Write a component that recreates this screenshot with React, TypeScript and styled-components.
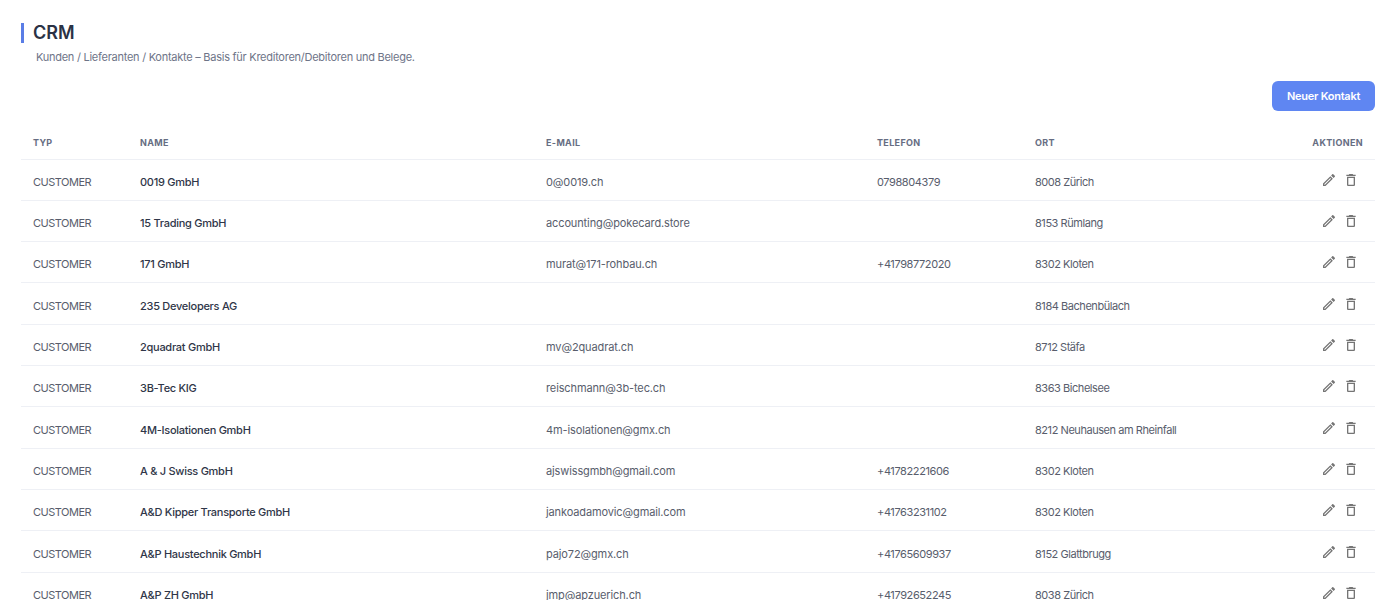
import React from "react";
import styled, { createGlobalStyle } from "styled-components";
import { MdDeleteOutline, MdOutlineEdit } from "react-icons/md";

const contacts = [
  { name: "0019 GmbH", email: "0@0019.ch", phone: "0798804379", city: "8008 Zürich" },
  { name: "15 Trading GmbH", email: "accounting@pokecard.store", phone: "", city: "8153 Rümlang" },
  { name: "171 GmbH", email: "murat@171-rohbau.ch", phone: "+41798772020", city: "8302 Kloten" },
  { name: "235 Developers AG", email: "", phone: "", city: "8184 Bachenbülach" },
  { name: "2quadrat GmbH", email: "mv@2quadrat.ch", phone: "", city: "8712 Stäfa" },
  { name: "3B-Tec KIG", email: "reischmann@3b-tec.ch", phone: "", city: "8363 Bichelsee" },
  { name: "4M-Isolationen GmbH", email: "4m-isolationen@gmx.ch", phone: "", city: "8212 Neuhausen am Rheinfall" },
  { name: "A & J Swiss GmbH", email: "ajswissgmbh@gmail.com", phone: "+41782221606", city: "8302 Kloten" },
  { name: "A&D Kipper Transporte GmbH", email: "jankoadamovic@gmail.com", phone: "+41763231102", city: "8302 Kloten" },
  { name: "A&P Haustechnik GmbH", email: "pajo72@gmx.ch", phone: "+41765609937", city: "8152 Glattbrugg" },
  { name: "A&P ZH GmbH", email: "jmp@apzuerich.ch", phone: "+41792652245", city: "8038 Zürich" },
];

const GlobalStyle = createGlobalStyle`
  html, body {
    margin: 0;
    background: #ffffff;
  }
  #root {
    height: 600px;
    overflow: hidden;
  }
`;

const Page = styled.div`
  padding: 23px 21px 0;
  font-family: Inter, "Open Sans", sans-serif;
  color: #2b3245;
`;

const Title = styled.h1`
  margin: 0;
  height: 20px;
  padding-left: 9px;
  border-left: 3px solid #5a7de6;
  font-size: 18px;
  font-weight: 600;
  line-height: 20px;
  color: #2b3245;
`;

const Subtitle = styled.p`
  margin: 5px 0 0 15px;
  font-size: 11px;
  line-height: 18px;
  letter-spacing: -0.26px;
  color: #6e7488;
`;

const Toolbar = styled.div`
  display: flex;
  justify-content: flex-end;
  margin-top: 15px;
`;

const PrimaryButton = styled.button`
  width: 103px;
  height: 30px;
  border: 0;
  border-radius: 6px;
  background: #5f86f2;
  color: #ffffff;
  font-family: inherit;
  font-size: 11px;
  font-weight: 600;
  letter-spacing: -0.25px;
`;

const Table = styled.table`
  width: 100%;
  margin-top: 14px;
  border-collapse: collapse;
  table-layout: fixed;
`;

const HeadCell = styled.th<{ $width: number; $right?: boolean }>`
  box-sizing: border-box;
  width: ${({ $width }) => `${$width}px`};
  height: 34px;
  padding: 2px 12px 0;
  border-bottom: 1px solid #eef0f5;
  font-size: 9px;
  font-weight: 700;
  letter-spacing: 0.35px;
  color: #666d82;
  text-align: ${({ $right }) => ($right ? "right" : "left")};
`;

const Row = styled.tr`
  height: 41.33px;
`;

const Cell = styled.td`
  padding: 4px 12px 0;
  border-bottom: 1px solid #eef0f5;
  font-size: 11px;
  font-weight: 400;
  letter-spacing: -0.12px;
  color: #585d6c;
  white-space: nowrap;
`;

const TypeCell = styled(Cell)`
  letter-spacing: -0.5px;
`;

const NameCell = styled(Cell)`
  font-weight: 500;
  letter-spacing: -0.27px;
  color: #2f3648;
`;

const PhoneCell = styled(Cell)`
  letter-spacing: -0.4px;
`;

const CityCell = styled(Cell)`
  letter-spacing: -0.45px;
`;

const ActionCell = styled(Cell)`
  padding: 0 12px;
`;

const Actions = styled.div`
  display: flex;
  justify-content: flex-end;
  align-items: center;
  gap: 6px;
  padding-right: 4px;
  color: #757575;
  font-size: 16px;
`;

const IconButton = styled.span`
  display: inline-flex;
`;

export default function App() {
  return (
    <>
      <GlobalStyle />
      <Page>
        <Title>CRM</Title>
        <Subtitle>Kunden / Lieferanten / Kontakte – Basis für Kreditoren/Debitoren und Belege.</Subtitle>
        <Toolbar>
          <PrimaryButton>Neuer Kontakt</PrimaryButton>
        </Toolbar>
        <Table>
          <thead>
            <tr>
              <HeadCell $width={107}>TYP</HeadCell>
              <HeadCell $width={406}>NAME</HeadCell>
              <HeadCell $width={331}>E-MAIL</HeadCell>
              <HeadCell $width={158}>TELEFON</HeadCell>
              <HeadCell $width={230}>ORT</HeadCell>
              <HeadCell $width={122} $right>AKTIONEN</HeadCell>
            </tr>
          </thead>
          <tbody>
            {contacts.map((c) => (
              <Row key={c.name}>
                <TypeCell>CUSTOMER</TypeCell>
                <NameCell>{c.name}</NameCell>
                <Cell>{c.email}</Cell>
                <PhoneCell>{c.phone}</PhoneCell>
                <CityCell>{c.city}</CityCell>
                <ActionCell>
                  <Actions>
                    <IconButton><MdOutlineEdit /></IconButton>
                    <IconButton><MdDeleteOutline /></IconButton>
                  </Actions>
                </ActionCell>
              </Row>
            ))}
          </tbody>
        </Table>
      </Page>
    </>
  );
}
